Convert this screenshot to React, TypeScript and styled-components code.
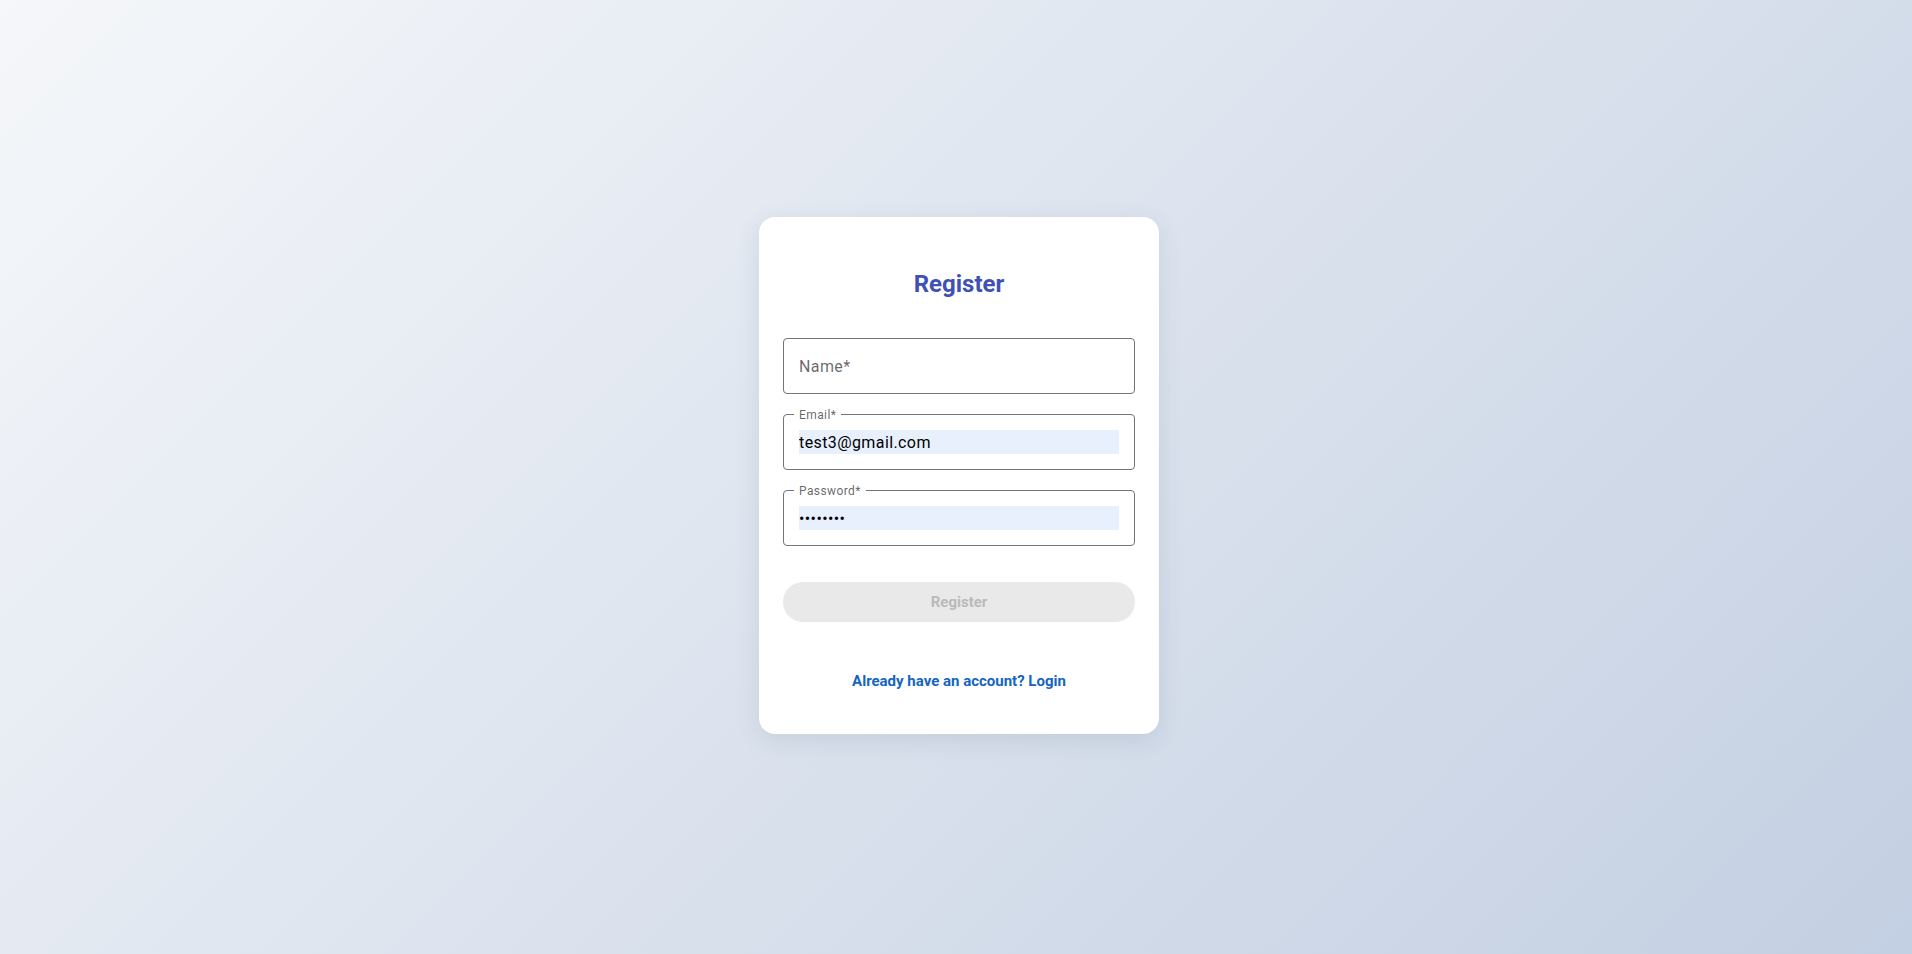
import { createGlobalStyle } from "styled-components";
import styled from "styled-components";

const GlobalStyle = createGlobalStyle`
    html, body {
        margin: 0;
        padding: 0;
    }

    body {
        font-family: Roboto, "Liberation Sans", Arial, sans-serif;
    }

    * {
        box-sizing: border-box;
    }
`

const Page = styled.main`
    display: flex;
    align-items: center;
    justify-content: center;
    min-height: 100vh;
    padding: 0 0 3px 6px;
    background: linear-gradient(135deg, #f5f7fa 0%, #c3cfe2 100%);
`

const Card = styled.form`
    display: flex;
    flex-direction: column;
    width: 400px;
    padding: 52px 24px 44px;
    background-color: #ffffff;
    border-radius: 16px;
    box-shadow: 0 6px 24px rgba(60, 72, 100, 0.12);
`

const Title = styled.h1`
    margin: 0 0 39px;
    font-size: 24px;
    line-height: 30px;
    font-weight: 700;
    text-align: center;
    color: #3f51b5;
`

const Fields = styled.div`
    display: flex;
    flex-direction: column;
    gap: 20px;
`

const Field = styled.label`
    position: relative;
    display: flex;
    align-items: center;
    height: 56px;
    padding: 0 15px;
    border: 1px solid #74747c;
    border-radius: 4px;
`

const Legend = styled.span`
    position: absolute;
    top: -7px;
    left: 10px;
    padding: 0 5px;
    font-size: 12px;
    line-height: 14px;
    letter-spacing: 0.4px;
    color: rgba(0, 0, 0, 0.62);
    background-color: #ffffff;
`

const Input = styled.input<{ $filled?: boolean }>`
    width: 100%;
    height: 24px;
    padding: 0;
    border: none;
    outline: none;
    font-family: Roboto, "Liberation Sans", Arial, sans-serif;
    font-size: 16px;
    letter-spacing: 0.4px;
    color: #000000;
    background-color: ${({ $filled }) => ($filled ? "#e8f0fe" : "transparent")};

    &::placeholder {
        color: rgba(0, 0, 0, 0.6);
        opacity: 1;
    }
`

const SubmitButton = styled.button`
    height: 40px;
    margin-top: 36px;
    border: none;
    border-radius: 20px;
    background-color: #e9e9e9;
    color: #bababa;
    font-family: Roboto, "Liberation Sans", Arial, sans-serif;
    font-size: 15px;
    font-weight: 700;
    cursor: default;
`

const LoginLink = styled.a`
    margin-top: 50px;
    font-size: 15px;
    line-height: 18px;
    font-weight: 700;
    text-align: center;
    text-decoration: none;
    color: #1565c0;
`

function App() {
    return (
        <>
            <GlobalStyle />
            <Page>
                <Card onSubmit={(e) => e.preventDefault()}>
                    <Title>Register</Title>
                    <Fields>
                        <Field>
                            <Input type="text" placeholder="Name*" readOnly />
                        </Field>
                        <Field>
                            <Legend>Email*</Legend>
                            <Input type="email" value="test3@gmail.com" $filled readOnly />
                        </Field>
                        <Field>
                            <Legend>Password*</Legend>
                            <Input type="password" value="password" $filled readOnly />
                        </Field>
                    </Fields>
                    <SubmitButton type="submit" disabled>Register</SubmitButton>
                    <LoginLink href="#">Already have an account? Login</LoginLink>
                </Card>
            </Page>
        </>
    )
}

export default App
